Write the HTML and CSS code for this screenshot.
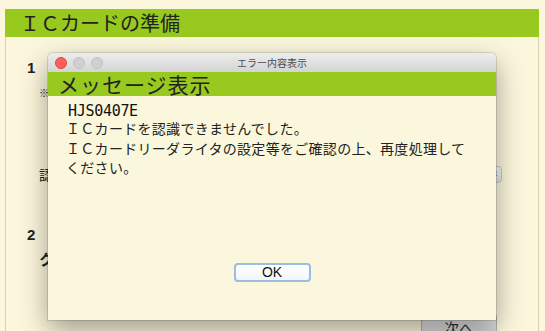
FILE: index.html
```html
<!DOCTYPE html>
<html lang="ja">
<head>
  <meta charset="UTF-8">
  <title>ＩＣカードの準備</title>
  <link rel="stylesheet" href="styles.css">
</head>
<body>
  <div class="panel">
    <h1 class="panel-title">ＩＣカードの準備</h1>
    <div class="panel-body">
      <section class="step">
        <div class="step-head"><span class="step-num">1</span><span class="step-text">ＩＣカードをセット</span></div>
        <p class="note">※ ＩＣカードをセットしてください。</p>
        <div class="field">
          <span class="field-label">認証方式</span>
          <div class="select"><span class="select-arrows">⬍</span></div>
        </div>
      </section>
      <section class="step step-2">
        <div class="step-head"><span class="step-num">2</span></div>
        <p class="step-lead">ク</p>
      </section>
      <div class="actions">
        <button class="btn-next">次へ</button>
      </div>
    </div>
  </div>

  <!-- Error dialog -->
  <div class="dialog">
    <div class="dialog-titlebar">
      <span class="light light-close"></span>
      <span class="light"></span>
      <span class="light"></span>
      <span class="dialog-caption">エラー内容表示</span>
    </div>
    <div class="dialog-head">メッセージ表示</div>
    <div class="dialog-body">
      <div class="msg-code">HJS0407E</div>
      <p class="msg-text">ＩＣカードを認識できませんでした。<br>ＩＣカードリーダライタの設定等をご確認の上、再度処理して<br>ください。</p>
      <div class="dialog-actions">
        <button class="btn-ok">OK</button>
      </div>
    </div>
  </div>
</body>
</html>
```

FILE: styles.css
```css
/* Colours */
:root {
  --bg: #fcf7dc;
  --dialog-bg: #fbf7dc;
  --green: #97c91f;
  --text: #222;
  --border: #d9d2b4;
}

* {
  margin: 0;
  padding: 0;
  box-sizing: border-box;
}

body {
  font-family: "Liberation Sans", "Noto Sans CJK JP", sans-serif;
  color: var(--text);
  background: var(--bg);
  width: 545px;
  height: 331px;
  overflow: hidden;
  position: relative;
}

/* Page panel */
.panel {
  margin: 9px 0 0 5px;
  width: 534px;
  height: 330px;
  border-left: 1px solid var(--border);
  border-right: 1px solid var(--border);
}

.panel-title {
  height: 28px;
  background: var(--green);
  font-family: "Noto Sans CJK JP", sans-serif;
  font-size: 20px;
  font-weight: 400;
  line-height: 28px;
  padding-left: 15px;
  margin-left: -1px;
  margin-right: -1px;
}

.panel-body {
  padding: 20px 36px 0 21px;
}

.step-head {
  display: flex;
  align-items: center;
  gap: 14px;
  height: 20px;
}

.step-num {
  font-size: 15px;
  font-weight: 700;
  width: 8px;
}

.step-text {
  font-family: "Noto Sans CJK JP", sans-serif;
  font-size: 14px;
  font-weight: 700;
}

.note {
  font-family: "Noto Sans CJK JP", sans-serif;
  font-size: 10px;
  margin: 9px 0 0 12px;
  line-height: 14px;
}

.field {
  display: flex;
  align-items: center;
  justify-content: space-between;
  margin: 65px 0 0 12px;
  height: 18px;
}

.field-label {
  font-family: "Noto Sans CJK JP", sans-serif;
  font-size: 14px;
}

.select {
  width: 200px;
  height: 17px;
  border: 1px solid #c8c8c8;
  border-radius: 4px;
  background: linear-gradient(#fafafa, #e6e6e6);
  display: flex;
  justify-content: flex-end;
  align-items: center;
  padding-right: 2px;
}

.select-arrows {
  font-size: 9px;
  color: #666;
}

.step-2 {
  margin-top: 41px;
}

.step-lead {
  font-family: "Noto Sans CJK JP", sans-serif;
  font-size: 15px;
  font-weight: 700;
  margin: 5px 0 0 12px;
  line-height: 20px;
}

.actions {
  display: flex;
  justify-content: flex-end;
  margin-top: 44px;
  padding-right: 5px;
}

.btn-next {
  width: 76px;
  height: 28px;
  border: 1px solid #b4b4b4;
  border-radius: 4px;
  background: linear-gradient(#eeeeee, #c9c9c9);
  font-family: "Noto Sans CJK JP", sans-serif;
  font-size: 15px;
  color: #333;
}

/* Dialog (floats over the page) */
.dialog {
  position: absolute;
  left: 48px;
  top: 53px;
  width: 448px;
  height: 267px;
  background: var(--dialog-bg);
  border-radius: 5px 5px 0 0;
  box-shadow: 0 10px 28px rgba(0, 0, 0, 0.38), 0 0 0 1px rgba(0, 0, 0, 0.12);
  display: flex;
  flex-direction: column;
}

.dialog-titlebar {
  height: 19px;
  background: linear-gradient(#ededed, #d4d4d4);
  border-radius: 5px 5px 0 0;
  display: flex;
  align-items: center;
  gap: 6px;
  padding-left: 7px;
  position: relative;
}

.light {
  width: 12px;
  height: 12px;
  border-radius: 50%;
  background: #d0d0d0;
  border: 1px solid #c2c2c2;
}

.light-close {
  background: #fc5f57;
  border-color: #e2463f;
}

.dialog-caption {
  position: absolute;
  left: 0;
  right: 0;
  text-align: center;
  font-family: "Noto Sans CJK JP", sans-serif;
  font-size: 10px;
  color: #4d4d4d;
  line-height: 19px;
}

.dialog-head {
  height: 24px;
  background: var(--green);
  font-family: "Noto Sans CJK JP", sans-serif;
  font-size: 21px;
  line-height: 24px;
  padding-left: 10px;
  letter-spacing: 1px;
}

.dialog-body {
  flex: 1;
  padding: 6px 16px 0 20px;
  display: flex;
  flex-direction: column;
}

.msg-code {
  font-family: "DejaVu Sans Mono", monospace;
  font-size: 15px;
  letter-spacing: -0.3px;
  line-height: 19px;
  color: #111;
}

.msg-text {
  font-family: "Noto Sans CJK JP", sans-serif;
  font-size: 14px;
  letter-spacing: 0.3px;
  line-height: 19.5px;
  margin: -2px 0 0 -2px;
}

.dialog-actions {
  display: flex;
  justify-content: center;
  margin-top: auto;
  margin-bottom: 38px;
  padding-right: 4px;
}

.btn-ok {
  width: 77px;
  height: 19px;
  border: 2px solid #9cbde2;
  border-radius: 4px;
  background: linear-gradient(#ffffff, #f2f6fb);
  font-family: "Liberation Sans", sans-serif;
  font-size: 14px;
  line-height: 15px;
  color: #111;
}
```
